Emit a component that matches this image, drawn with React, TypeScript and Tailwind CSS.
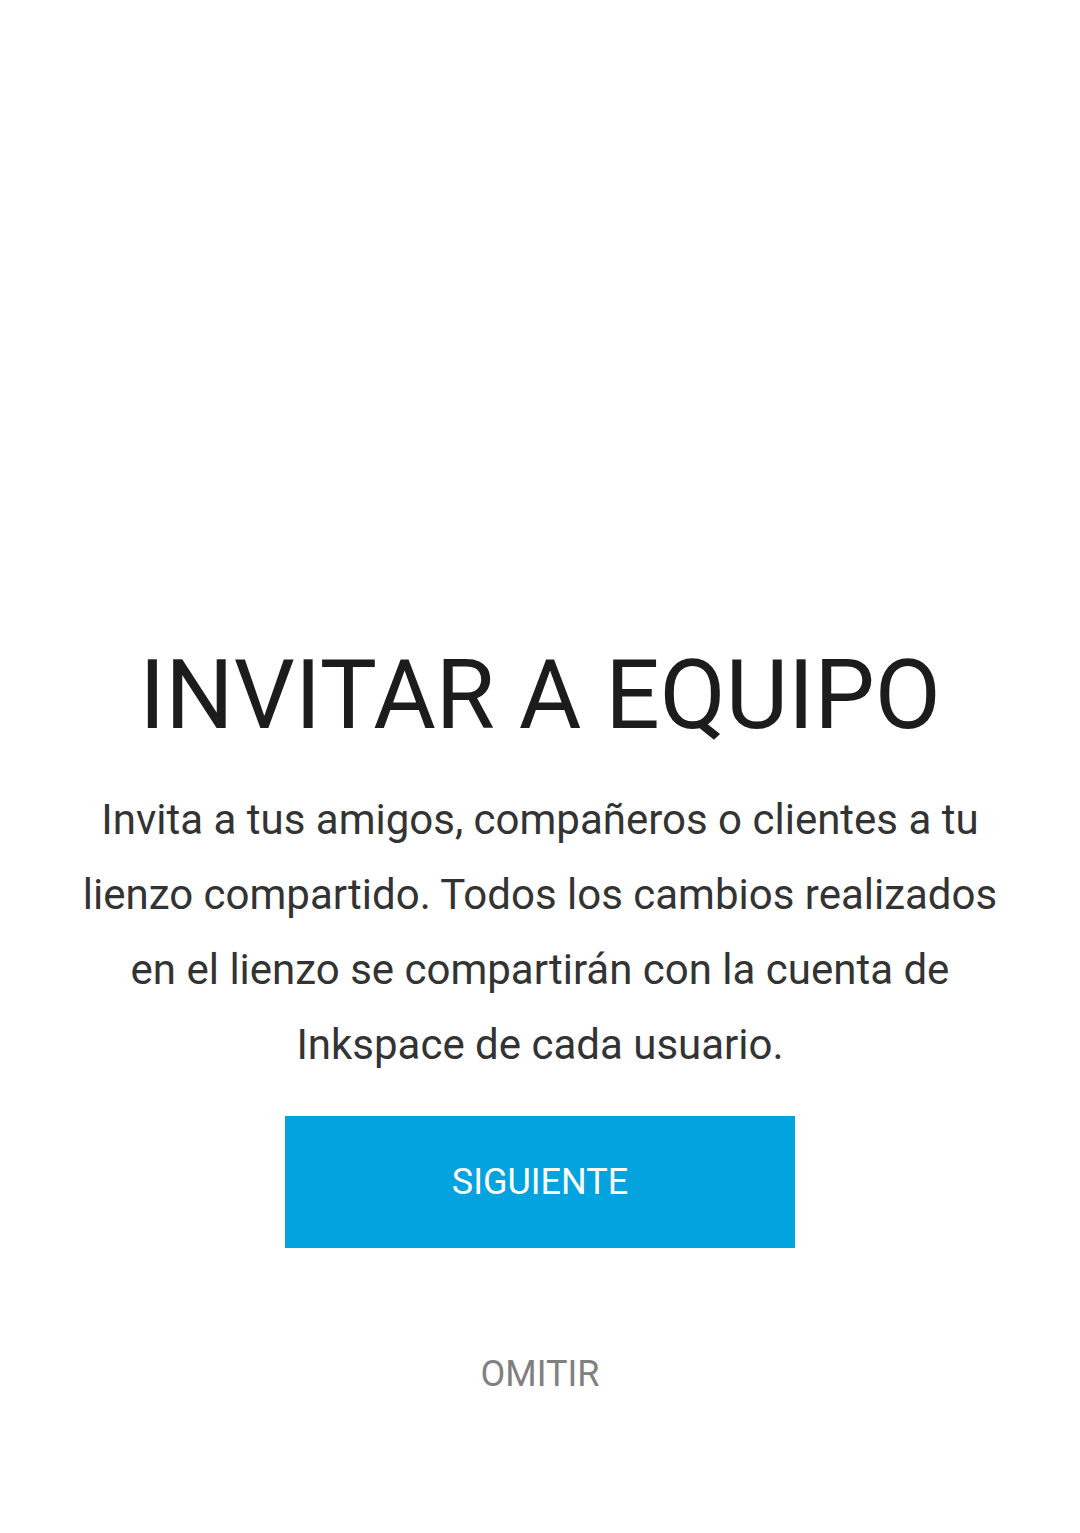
export default function App() {
  return (
    <div className="min-h-[1533px] w-full bg-white flex flex-col items-center font-['Roboto',sans-serif]">
      {/* Intro copy */}
      <h1 className="mt-[647px] text-[96px] leading-[96px] font-normal text-[#1c1c1c]">
        INVITAR A EQUIPO
      </h1>
      <p className="mt-[39px] w-[940px] text-center text-[42px] leading-[75px] text-[#333333]">
        Invita a tus amigos, compañeros o clientes a tu lienzo compartido.
        Todos los cambios realizados en el lienzo se compartirán con la cuenta
        de Inkspace de cada usuario.
      </p>

      {/* Actions */}
      <button className="mt-[34px] w-[510px] h-[132px] bg-[#03a3e0] text-white text-[36px] leading-none">
        SIGUIENTE
      </button>
      <button className="mt-[101px] text-[36px] leading-[50px] text-[#808080]">
        OMITIR
      </button>
    </div>
  );
}
